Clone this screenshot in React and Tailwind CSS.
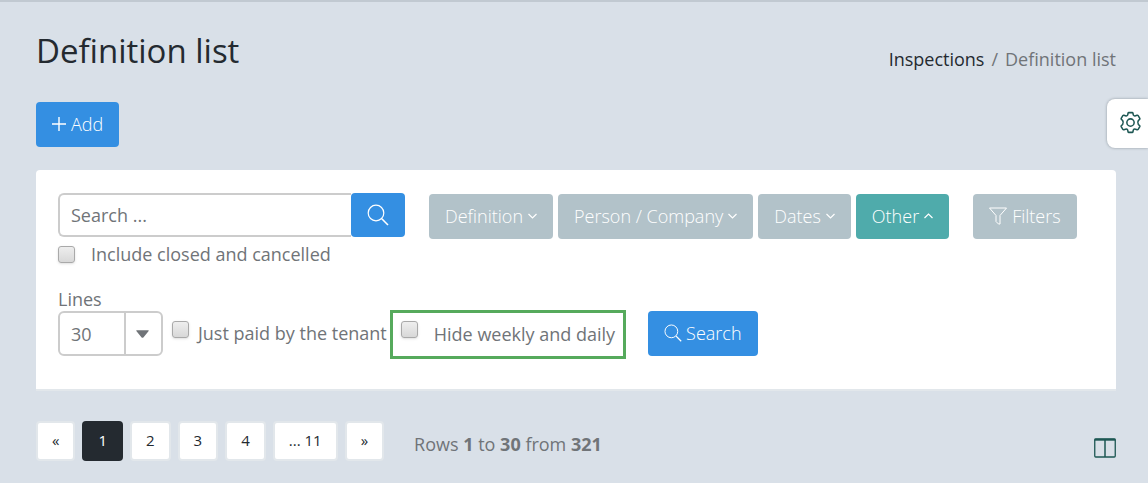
import React, { useState } from 'react';

const SearchIcon = ({ className }) => (
    <svg viewBox="0 0 22 22" className={className} fill="none" stroke="currentColor" aria-hidden="true">
        <circle cx="9" cy="9" r="7.8" strokeWidth="1.2" />
        <path d="M14.8 14.8 L21 21" strokeWidth="1.6" />
    </svg>
);

const PlusIcon = () => (
    <svg viewBox="0 0 14 14" className="w-3.5 h-3.5" fill="none" stroke="currentColor" strokeWidth="1.4" aria-hidden="true">
        <path d="M7 0 V14 M0 7 H14" />
    </svg>
);

const FunnelIcon = () => (
    <svg viewBox="0 0 18 18" className="w-[18px] h-[18px]" fill="none" stroke="currentColor" strokeWidth="1" strokeLinejoin="round" aria-hidden="true">
        <path d="M0.5 1 H17.5 L11 8.5 V17 H9.5 L7 14.5 V8.5 Z" />
    </svg>
);

const GearIcon = () => (
    <svg viewBox="0 0 24 24" className="w-[23px] h-[23px]" fill="none" stroke="currentColor" strokeWidth="1.6" strokeLinejoin="round" aria-hidden="true">
        <path d="M9.4 2.4 Q9.6 1.7 10.3 1.7 H13.7 Q14.4 1.7 14.6 2.4 L14.9 4.1 Q15.7 5.5 17.2 5 L18.9 4.4 Q19.6 4.2 20 4.8 L21.7 7.7 Q22 8.3 21.5 8.8 L20.2 9.9 Q18.9 12 20.2 14.1 L21.5 15.2 Q22 15.7 21.7 16.3 L20 19.2 Q19.6 19.8 18.9 19.6 L17.2 19 Q15.7 18.5 14.9 19.9 L14.6 21.6 Q14.4 22.3 13.7 22.3 H10.3 Q9.6 22.3 9.4 21.6 L9.1 19.9 Q8.3 18.5 6.8 19 L5.1 19.6 Q4.4 19.8 4 19.2 L2.3 16.3 Q2 15.7 2.5 15.2 L3.8 14.1 Q5.1 12 3.8 9.9 L2.5 8.8 Q2 8.3 2.3 7.7 L4 4.8 Q4.4 4.2 5.1 4.4 L6.8 5 Q8.3 5.5 9.1 4.1 Z" />
        <circle cx="12" cy="12" r="3.8" />
    </svg>
);

const Caret = ({ up }) => (
    <svg viewBox="0 0 9 6" className="w-[9px] h-[6px]" fill="none" stroke="currentColor" strokeWidth="1.2" aria-hidden="true">
        <path d={up ? 'M0.5 5 L4.5 1 L8.5 5' : 'M0.5 1 L4.5 5 L8.5 1'} />
    </svg>
);

const Checkbox = ({ id }) => (
    <input
        id={id}
        type="checkbox"
        className="appearance-none shrink-0 w-[17px] h-[17px] rounded-[3px] border border-[#a9a9a9] bg-linear-to-b from-[#eeeeee] to-[#d8d8d8] shadow-sm checked:bg-[#348fe2]"
    />
);

const buttonClass = 'flex items-center justify-center h-[45px] pb-0.5 rounded text-white font-light text-lg';

const groups = ['Definition', 'Person / Company', 'Dates', 'Other'];
const pages = ['«', '1', '2', '3', '4', '... 11', '»'];

const Header = () => (
    <header className="flex justify-between items-start">
        <h1 className="text-[33px] leading-[46px] text-[#242a30]">Definition list</h1>
        <nav aria-label="Breadcrumb" className="flex gap-[7px] mt-[19px] leading-6">
            <a href="#inspections" className="text-[#242a30]">Inspections</a>
            <span>/</span>
            <span>Definition list</span>
        </nav>
    </header>
);

const SearchPanel = () => {
    const [open, setOpen] = useState('Other');

    return (
        <form className="mt-[23px] px-[22px] pt-[23px] pb-[33px] bg-white rounded-t border-b-2 border-[#e2e7eb]" onSubmit={(e) => e.preventDefault()}>
            <div className="flex items-start">
                <div className="w-[347px]">
                    <div className="flex">
                        <input
                            type="text"
                            aria-label="Search"
                            placeholder="Search ..."
                            className="flex-1 min-w-0 h-11 px-[11px] border-2 border-r-0 border-[#cccccc] rounded-l-md placeholder:text-[#707478]"
                        />
                        <button type="submit" aria-label="Search" className="flex items-center justify-center w-[54px] h-11 rounded bg-[#348fe2] text-white">
                            <SearchIcon className="w-[22px] h-[22px]" />
                        </button>
                    </div>
                    <div className="flex items-center gap-4 mt-[5px] leading-6">
                        <Checkbox id="closed" />
                        <label htmlFor="closed">Include closed and cancelled</label>
                    </div>
                </div>
                <div className="flex gap-[5px] ml-6 mt-px">
                    {groups.map((name) => (
                        <button
                            key={name}
                            type="button"
                            onClick={() => setOpen(open === name ? '' : name)}
                            className={`${buttonClass} gap-[5px] px-4 ${open === name ? 'bg-[#4fabab]' : 'bg-[#b2c2c9]'}`}
                        >
                            {name}
                            <Caret up={open === name} />
                        </button>
                    ))}
                </div>
                <button type="button" className={`${buttonClass} gap-[5px] px-4 ml-6 mt-px bg-[#b2c2c9]`}>
                    <FunnelIcon />
                    Filters
                </button>
            </div>

            <div className="flex items-end mt-[21px]">
                <div>
                    <label htmlFor="lines" className="block leading-6">Lines</label>
                    <div className="relative">
                        <select id="lines" defaultValue="30" className="appearance-none block w-[105px] h-[45px] pl-[11px] border-2 border-[#cccccc] rounded-md bg-white">
                            <option>10</option>
                            <option>30</option>
                            <option>50</option>
                        </select>
                        <span className="absolute inset-y-0 right-0 flex items-center justify-center w-[39px] pr-1 border-l-2 border-[#cccccc] pointer-events-none">
                            <svg viewBox="0 0 12 7" className="w-[13px] h-2" fill="currentColor" aria-hidden="true">
                                <path d="M1 0 H11 Q12.5 0 11.5 1 L7 6.4 Q6 7.4 5 6.4 L0.5 1 Q-0.5 0 1 0 Z" />
                            </svg>
                        </span>
                    </div>
                </div>
                <div className="flex items-start gap-[9px] ml-[9px] mb-[11px] leading-6">
                    <Checkbox id="tenant" />
                    <label htmlFor="tenant">Just paid by the tenant</label>
                </div>
                <div className="flex items-start gap-4 ml-[3px] -mb-[3px] px-2 py-2 border-3 border-[#56aa5c] leading-[27px]">
                    <Checkbox id="weekly" />
                    <label htmlFor="weekly">Hide weekly and daily</label>
                </div>
                <button type="submit" className={`${buttonClass} gap-1 px-4 ml-[22px] bg-[#348fe2]`}>
                    <SearchIcon className="w-[18px] h-[18px]" />
                    Search
                </button>
            </div>
        </form>
    );
};

const Pagination = () => {
    const [current, setCurrent] = useState('1');

    return (
        <div className="flex items-center mt-[30px]">
            <nav aria-label="Pages" className="flex items-center gap-[7px]">
                {pages.map((page) => (
                    <button
                        key={page}
                        type="button"
                        onClick={() => setCurrent(page)}
                        className={`h-10 rounded text-[15px] ${page === current ? 'px-4 bg-[#242a30] text-white' : 'px-[14px] border-2 border-[#e2e7eb] bg-white text-[#242a30]'}`}
                    >
                        {page}
                    </button>
                ))}
            </nav>
            <p className="ml-[30px] mt-[5px]">
                Rows <b>1</b> to <b>30</b> from <b>321</b>
            </p>
            <button type="button" aria-label="Columns" className="ml-auto mt-[14px] text-[#1d5753]">
                <svg viewBox="0 0 22 20" className="w-[22px] h-5" fill="none" stroke="currentColor" aria-hidden="true">
                    <rect x="0.75" y="1" width="20.5" height="18" rx="1" strokeWidth="1.3" />
                    <path d="M0.5 1.7 H21.5" strokeWidth="2" />
                    <path d="M11 2 V19" strokeWidth="1.5" />
                </svg>
            </button>
        </div>
    );
};

const App = () => (
    <div className="min-h-screen pl-9 pr-8 pt-[26px] bg-[#d9e0e8] border-t-2 border-[#c1c9d1] font-['Open_Sans','Noto_Sans',sans-serif] text-lg text-[#707478]">
        <Header />
        <button type="button" className={`${buttonClass} gap-[5px] px-4 mt-7 bg-[#348fe2]`}>
            <PlusIcon />
            Add
        </button>
        <SearchPanel />
        <Pagination />
        <button type="button" aria-label="Settings" className="fixed right-0 top-[99px] flex items-center pl-3 pr-1.5 pb-0.5 h-[49px] rounded-l-lg bg-white text-[#1d5753] shadow-[0_0_3px_#8e979f]">
            <GearIcon />
        </button>
    </div>
);

export default App;
